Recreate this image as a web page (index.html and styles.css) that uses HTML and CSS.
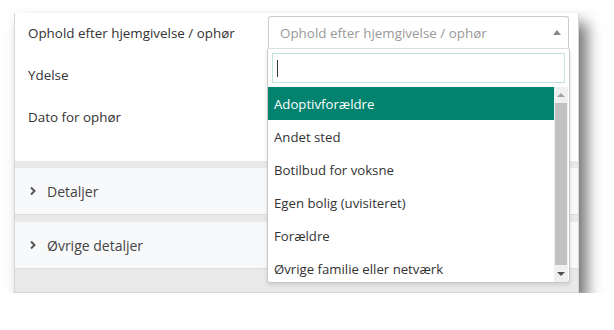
FILE: index.html
```html
<!DOCTYPE html>
<html lang="da">
<head>
  <meta charset="UTF-8">
  <title>Ophold efter hjemgivelse</title>
  <link rel="stylesheet" href="styles.css">
</head>
<body>
  <div class="panel">
    <div class="form">
      <div class="row">
        <span class="label">Ophold efter hjemgivelse / ophør</span>
        <div class="select">
          <span class="placeholder">Ophold efter hjemgivelse / ophør</span>
          <span class="caret-up"></span>
        </div>
      </div>
      <div class="row">
        <span class="label">Ydelse</span>
      </div>
      <div class="row">
        <span class="label">Dato for ophør</span>
      </div>
    </div>

    <div class="section">
      <svg class="chevron" width="8" height="10" viewBox="0 0 8 10"><path d="M2 1.5 L5.5 5 L2 8.5" fill="none" stroke="#555" stroke-width="2"/></svg>
      <span>Detaljer</span>
    </div>
    <div class="section">
      <svg class="chevron" width="8" height="10" viewBox="0 0 8 10"><path d="M2 1.5 L5.5 5 L2 8.5" fill="none" stroke="#555" stroke-width="2"/></svg>
      <span>Øvrige detaljer</span>
    </div>

    <!-- dropdown åben over indholdet -->
    <div class="dropdown">
      <div class="search">
        <span class="cursor"></span>
      </div>
      <div class="results">
        <ul class="options">
          <li class="active">Adoptivforældre</li>
          <li>Andet sted</li>
          <li>Botilbud for voksne</li>
          <li>Egen bolig (uvisiteret)</li>
          <li>Forældre</li>
          <li>Øvrige familie eller netværk</li>
        </ul>
        <div class="scrollbar">
          <span class="arrow up"></span>
          <span class="thumb"></span>
          <span class="arrow down"></span>
        </div>
      </div>
    </div>
  </div>
</body>
</html>
```

FILE: styles.css
```css
body {
  margin: 0;
  background: #fff;
  font-family: "Open Sans", Arial, sans-serif;
  font-size: 13.4px;
  color: #333;
}

.panel {
  position: relative;
  margin: 13px 0 0 14px;
  width: 563px;
  background: #e9e9e9;
  border: 1px solid #d6d6d6;
  border-top: none;
  padding-bottom: 23px;
  box-shadow: 8px 10px 14px rgba(0, 0, 0, 0.55);
}

.form {
  background: #fff;
  padding: 3px 0 28px 13px;
  display: flex;
  flex-direction: column;
  gap: 9px;
}

.row {
  height: 33px;
  display: flex;
  align-items: center;
}

.label {
  width: 240px;
}

.select {
  width: 301px;
  height: 33px;
  box-sizing: border-box;
  border: 1px solid #ccc;
  border-bottom-color: #e0e0e0;
  border-radius: 3px 3px 0 0;
  display: flex;
  align-items: center;
  justify-content: space-between;
  padding: 0 7px 0 11px;
}

.placeholder {
  color: #999;
}

.caret-up {
  width: 0;
  height: 0;
  border-left: 4px solid transparent;
  border-right: 4px solid transparent;
  border-bottom: 5px solid #888;
}

.section {
  margin-top: 7px;
  height: 46px;
  background: #f8f9fb;
  border-bottom: 1px solid #dcdcdc;
  display: flex;
  align-items: center;
  gap: 10px;
  padding-left: 14px;
  font-size: 14px;
  color: #444;
}

.chevron {
  display: block;
}

.dropdown {
  position: absolute;
  left: 252px;
  top: 36px;
  width: 303px;
  height: 234px;
  box-sizing: border-box;
  background: #fff;
  border: 1px solid #c8c8c8;
  border-top: none;
  border-radius: 0 0 3px 3px;
  box-shadow: 0 2px 4px rgba(0, 0, 0, 0.12);
}

.search {
  margin: 4px 4px 0 4px;
  height: 30px;
  box-sizing: border-box;
  border: 1px solid #bfe3df;
  display: flex;
  align-items: center;
  padding-left: 4px;
}

.cursor {
  width: 1px;
  height: 17px;
  background: #333;
}

.results {
  margin-top: 4px;
  height: 195px;
  display: flex;
}

.options {
  list-style: none;
  margin: 0;
  padding: 0;
  flex: 1;
  overflow: hidden;
  font-size: 13.2px;
}

.options li {
  height: 33px;
  line-height: 35px;
  padding-left: 6px;
}

.options li.active {
  background: #01836f;
  color: #fff;
}

.scrollbar {
  width: 14px;
  margin-right: 1px;
  background: #f0f0f0;
  display: flex;
  flex-direction: column;
  align-items: center;
}

.arrow {
  width: 0;
  height: 0;
  border-left: 4px solid transparent;
  border-right: 4px solid transparent;
}

.arrow.up {
  border-bottom: 4px solid #a3a3a3;
  margin: 6px 0;
}

.arrow.down {
  border-top: 4px solid #505050;
  margin: 7px 0 6px;
}

.thumb {
  flex: 1;
  width: 12px;
  background: #c1c1c1;
}
```
